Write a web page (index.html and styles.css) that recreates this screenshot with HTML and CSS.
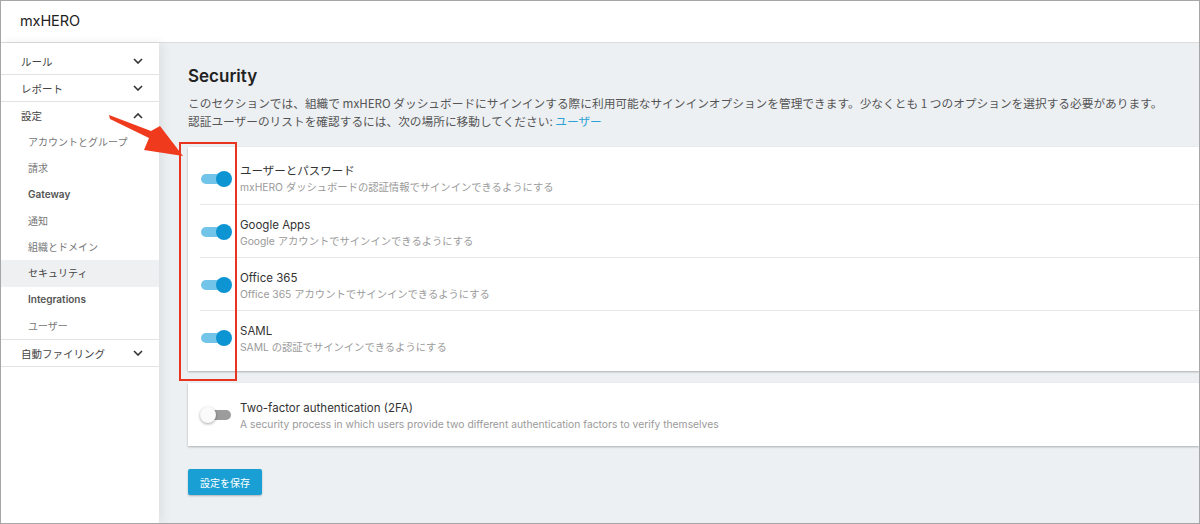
FILE: index.html
```html
<!DOCTYPE html>
<html lang="ja">
<head>
<meta charset="utf-8">
<title>mxHERO Security</title>
<link rel="stylesheet" href="styles.css">
</head>
<body>
<div class="frame">
  <header class="topbar">mxHERO</header>
  <div class="layout">
    <nav class="sidebar">
      <div class="group"><span>ルール</span><svg class="chev" viewBox="0 0 10 6"><path d="M1 1l4 4 4-4"/></svg></div>
      <div class="group"><span>レポート</span><svg class="chev" viewBox="0 0 10 6"><path d="M1 1l4 4 4-4"/></svg></div>
      <div class="group open"><span>設定</span><svg class="chev" viewBox="0 0 10 6"><path d="M1 5l4-4 4 4"/></svg></div>
      <div class="subs">
        <div class="sub">アカウントとグループ</div>
        <div class="sub">請求</div>
        <div class="sub bold">Gateway</div>
        <div class="sub">通知</div>
        <div class="sub">組織とドメイン</div>
        <div class="sub active">セキュリティ</div>
        <div class="sub bold">Integrations</div>
        <div class="sub">ユーザー</div>
      </div>
      <div class="group"><span>自動ファイリング</span><svg class="chev" viewBox="0 0 10 6"><path d="M1 1l4 4 4-4"/></svg></div>
    </nav>
    <main class="main">
      <h1 class="title">Security</h1>
      <p class="desc">このセクションでは、組織で mxHERO ダッシュボードにサインインする際に利用可能なサインインオプションを管理できます。少なくとも 1 つのオプションを選択する必要があります。<br>認証ユーザーのリストを確認するには、次の場所に移動してください: <a class="link">ユーザー</a></p>
      <section class="card">
        <div class="row">
          <span class="toggle on"></span>
          <div class="txt"><div class="t">ユーザーとパスワード</div><div class="s">mxHERO ダッシュボードの認証情報でサインインできるようにする</div></div>
        </div>
        <div class="row">
          <span class="toggle on"></span>
          <div class="txt"><div class="t">Google Apps</div><div class="s">Google アカウントでサインインできるようにする</div></div>
        </div>
        <div class="row">
          <span class="toggle on"></span>
          <div class="txt"><div class="t">Office 365</div><div class="s">Office 365 アカウントでサインインできるようにする</div></div>
        </div>
        <div class="row">
          <span class="toggle on"></span>
          <div class="txt"><div class="t">SAML</div><div class="s">SAML の認証でサインインできるようにする</div></div>
        </div>
      </section>
      <section class="card card2">
        <div class="row">
          <span class="toggle off"></span>
          <div class="txt"><div class="t">Two-factor authentication (2FA)</div><div class="s">A security process in which users provide two different authentication factors to verify themselves</div></div>
        </div>
      </section>
      <button class="save">設定を保存</button>
    </main>
  </div>
  <div class="highlight"></div>
  <svg class="arrow" viewBox="0 0 200 200" width="200" height="200">
    <path d="M20 15 L21 19 L60 38 L55 50 L94 56 L71 26 L62 31 Z" />
  </svg>
</div>
</body>
</html>
```
FILE: styles.css
```css
* { box-sizing: border-box; margin: 0; padding: 0; }
html, body { width: 1200px; height: 524px; overflow: hidden; background: #fff; }
body {
  font-family: Inter, "Noto Sans", "Noto Sans CJK JP", sans-serif;
  color: #3a3a3a;
}
.frame {
  position: relative;
  width: 1200px;
  height: 524px;
  border: 1px solid #a6a6a6;
  display: flex;
  flex-direction: column;
  overflow: hidden;
}
.topbar {
  height: 42px;
  flex: none;
  border-bottom: 1px solid #dcdcdc;
  padding: 0 0 3px 19px;
  display: flex;
  align-items: center;
  font-size: 14.5px;
  color: #222;
  letter-spacing: -0.1px;
}
.layout { flex: 1; display: flex; min-height: 0; }
.sidebar {
  width: 158px;
  flex: none;
  background: #fff;
  padding-top: 5px;
  position: relative;
  z-index: 1;
  box-shadow: 3px 0 10px rgba(0,0,0,0.07);
  font-family: "Noto Sans CJK JP", sans-serif;
}
.group {
  height: 27px;
  border-bottom: 1px solid #e3e3e3;
  display: flex;
  align-items: center;
  justify-content: space-between;
  padding: 0 16px 0 20px;
  font-size: 10.5px;
  color: #444;
}
.group.open { border-bottom: none; }
.chev { width: 10px; height: 6px; fill: none; stroke: #333; stroke-width: 1.6; }
.subs { border-bottom: 1px solid #e3e3e3; }
.sub {
  height: 26.3px;
  display: flex;
  align-items: center;
  padding: 0 0 2px 27px;
  font-size: 10px;
  color: #777;
}
.sub.bold { font-family: Inter, sans-serif; font-weight: 600; color: #555; }
.sub.active { background: #eef0f2; color: #444; }
.main {
  flex: 1;
  background: #edf0f3;
  padding: 22px 0 0 29px;
}
.title {
  font-size: 17px;
  font-weight: 600;
  color: #222;
  line-height: 24px;
  margin-top: -1px;
}
.desc {
  margin-top: 6px;
  font-family: "Noto Sans CJK JP", sans-serif;
  font-size: 11.7px;
  line-height: 18px;
  color: #555;
}
.link { color: #2aa2d6; }
.card {
  margin-top: 17px;
  background: #fff;
  padding: 4px 0 8px;
  box-shadow: 0 1px 2px rgba(0,0,0,0.28);
}
.card2 { margin-top: 12px; padding: 0; }
.card2 .row { height: 63px; border-top: none; }
.row {
  height: 53px;
  display: flex;
  align-items: center;
  margin-left: 12px;
  border-top: 1px solid #e8e8e8;
}
.row:first-child { border-top: none; }
.toggle {
  position: relative;
  width: 30px;
  height: 10px;
  border-radius: 5px;
  margin: 2px 10px 0 1px;
  flex: none;
}
.toggle::after {
  content: "";
  position: absolute;
  top: -3px;
  width: 16px;
  height: 16px;
  border-radius: 50%;
}
.toggle.on { background: #72c5e8; }
.toggle.on::after { right: -1px; background: #0d94d2; }
.toggle.off { background: #9c9c9c; margin-top: 1px; }
.toggle.off::after { left: -1px; background: #fafafa; box-shadow: 0 1px 3px rgba(0,0,0,0.35); }
.txt { font-family: Inter, "Noto Sans CJK JP", sans-serif; padding-top: 3px; margin-left: -1px; }
.t { font-size: 11.5px; color: #333; line-height: 16px; }
.s { font-size: 10.3px; color: #9a9a9a; line-height: 16px; }
.save {
  margin-top: 23px;
  width: 74px;
  height: 26px;
  border: none;
  border-radius: 2px;
  background: #1a9fd4;
  color: #fff;
  font-family: "Noto Sans CJK JP", sans-serif;
  font-size: 10px;
  box-shadow: 0 1px 2px rgba(0,0,0,0.25);
}
.highlight {
  position: absolute;
  left: 178px;
  top: 141px;
  width: 58px;
  height: 239px;
  border: 2px solid #e8341f;
  z-index: 5;
}
.arrow {
  position: absolute;
  left: 88px;
  top: 99px;
  z-index: 5;
  fill: #f03a1d;
}
```
